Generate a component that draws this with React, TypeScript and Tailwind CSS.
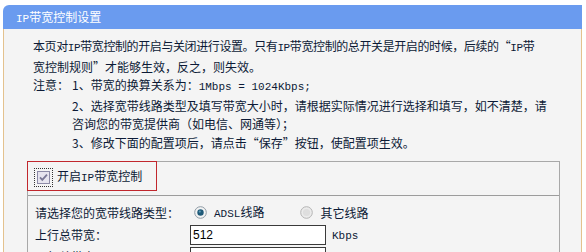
import { type ReactNode } from 'react';

// half-width latin runs (SimSun-like metrics)
function L({ children }: { children: ReactNode }) {
  return <span className="font-['Liberation_Mono',monospace] text-[11px]">{children}</span>;
}

function Checkbox() {
  return (
    <span className="flex h-[19px] w-[19px] items-center justify-center border border-dotted border-[#333]">
      <svg width="13" height="13" viewBox="0 0 13 13">
        <rect x="0.5" y="0.5" width="12" height="12" fill="#e6e4ee" stroke="#8c8aa6" />
        <path d="M3 6.3 L5.3 8.8 L10 3.6" fill="none" stroke="#7a7896" strokeWidth="1.8" />
      </svg>
    </span>
  );
}

function Radio({ checked }: { checked?: boolean }) {
  return (
    <svg width="13" height="13" viewBox="0 0 13 13">
      <circle cx="6.5" cy="6.5" r="5.8" fill={checked ? '#f4f4f4' : '#ebebeb'} stroke={checked ? '#8e9aa4' : '#b4b4b4'} />
      {checked && <circle cx="6.5" cy="6.5" r="3.2" fill="#1f5a78" />}
      {checked && <circle cx="5.8" cy="5.6" r="1.1" fill="#5d9ab8" />}
      {!checked && <circle cx="6.5" cy="6.5" r="3.6" fill="#dedede" />}
    </svg>
  );
}

function Input({ value }: { value: string }) {
  return (
    <div className="flex h-[20px] w-[136px] items-center border border-[#3a3a3a] bg-white pl-[2px] font-['Liberation_Sans',sans-serif] text-[12px] text-black">
      {value}
    </div>
  );
}

export default function App() {
  return (
    <div className="h-[252px] overflow-hidden bg-white pl-[3px] pt-[5px] font-['Noto_Sans_CJK_SC',sans-serif] text-[12px]">
      <div className="w-[579px]">
        <div className="h-[24px] rounded-tl-[6px] bg-[#6a9bef] pl-[13px] leading-[24px] text-white">
          <L>IP</L>带宽控制设置
        </div>
        <div className="h-[240px] border-x border-[#e4c28e] bg-[#f4f4f4] pt-[8px]">
          <div className="pl-[29px] leading-[18.6px] text-[#0c1a36] whitespace-nowrap">
            <div className="tracking-[-0.4px]">本页对<L>IP</L>带宽控制的开启与关闭进行设置。只有<L>IP</L>带宽控制的总开关是开启的时候，后续的“<L>IP</L>带</div>
            <div>宽控制规则”才能够生效，反之，则失效。</div>
            <div className="flex">
              <span className="w-[39px]">注意：</span>
              <span>1、带宽的换算关系为：<L>1Mbps = 1024Kbps;</L></span>
            </div>
            <div className="pl-[39px]">2、选择宽带线路类型及填写带宽大小时，请根据实际情况进行选择和填写，如不清楚，请</div>
            <div className="pl-[39px]">咨询您的带宽提供商（如电信、网通等）；</div>
            <div className="pl-[39px]">3、修改下面的配置项后，请点击“保存”按钮，使配置项生效。</div>
          </div>

          <div className="ml-[23px] mt-[8px] w-[533px] border-x border-t border-[#a8a8a8] text-[#0c1a36]">
            <div className="relative flex h-[34px] items-center border-b border-[#9c9c9c] pb-[2px] pl-[6px]">
              <div className="absolute -left-px -top-px h-[30px] w-[130px] border border-[#c1272d]" />
              <Checkbox />
              <span className="ml-[4px]">开启<L>IP</L>带宽控制</span>
            </div>
            <div className="pl-[7px] pt-[6px]">
              <div className="flex h-[22px] items-center">
                <span className="w-[155px]">请选择您的宽带线路类型：</span>
                <span className="ml-[4px] flex items-center">
                  <Radio checked />
                  <span className="ml-[7px]"><L>ADSL</L>线路</span>
                </span>
                <span className="ml-[36px] flex items-center">
                  <Radio />
                  <span className="ml-[7px]">其它线路</span>
                </span>
              </div>
              <div className="flex h-[22px] items-center">
                <span className="w-[155px]">上行总带宽：</span>
                <Input value="512" />
                <span className="ml-[6px]"><L>Kbps</L></span>
              </div>
              <div className="flex h-[22px] items-center">
                <span className="w-[155px]">下行总带宽：</span>
                <Input value="4096" />
                <span className="ml-[6px]"><L>Kbps</L></span>
              </div>
            </div>
          </div>
        </div>
      </div>
    </div>
  );
}
